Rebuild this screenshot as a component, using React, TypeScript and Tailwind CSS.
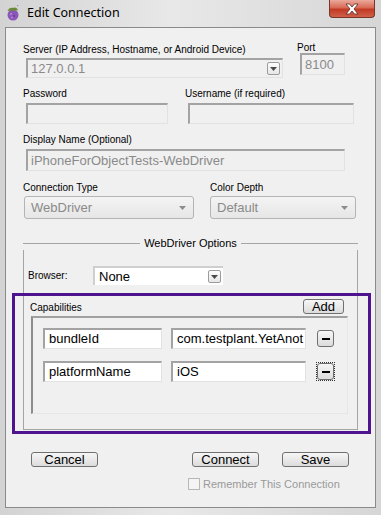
import React from "react";

const font = { fontFamily: '"Liberation Sans", Arial, sans-serif' };

const sunken =
  "border-t-2 border-l-2 border-t-[#a3a3a3] border-l-[#a3a3a3] border-r border-b border-r-[#e2e2e2] border-b-[#e2e2e2]";

const SmallArrowButton = () => (
  <div className="flex h-[13px] w-[13px] items-center justify-center rounded-[2px] border border-[#9c9c9c] bg-[linear-gradient(#fdfdfd,#e6e6e6)]">
    <svg width="7" height="4" viewBox="0 0 7 4">
      <path d="M0 0h7L3.5 4z" fill="#4a4a4a" />
    </svg>
  </div>
);

const Win7Select = ({ value, width }: { value: string; width: string }) => (
  <div
    className={`flex h-[23px] ${width} items-center justify-between rounded-[3px] border border-[#b4b4b4] bg-[linear-gradient(#f4f4f4,#e6e6e6)] pl-[6px] pr-[7px]`}
  >
    <span className="text-[13px] text-[#8a8a8a]">{value}</span>
    <svg width="7" height="4" viewBox="0 0 7 4">
      <path d="M0 0h7L3.5 4z" fill="#8c8c8c" />
    </svg>
  </div>
);

const Btn = ({
  label,
  className = "",
}: {
  label: string;
  className?: string;
}) => (
  <div
    className={`flex items-center justify-center rounded-[3px] border border-[#707070] bg-[linear-gradient(#f6f6f6,#dcdcdc)] text-[13px] leading-none text-black ${className}`}
  >
    {label}
  </div>
);

const CapRow = ({
  k,
  v,
  focused,
}: {
  k: string;
  v: string;
  focused?: boolean;
}) => (
  <div className="flex items-center">
    <div
      className={`flex h-[21px] w-[119px] items-center overflow-hidden bg-white pl-[4px] text-[13px] text-black ${sunken}`}
    >
      {k}
    </div>
    <div
      className={`ml-[9px] flex h-[21px] w-[135px] items-center overflow-hidden whitespace-nowrap bg-white pl-[4px] text-[13px] text-black ${sunken}`}
    >
      {v}
    </div>
    <div
      className={`ml-[10px] flex h-[19px] w-[19px] items-center justify-center ${
        focused ? "border border-dotted border-[#333]" : ""
      }`}
    >
      <div className="flex h-[17px] w-[17px] items-center justify-center rounded-[3px] border border-[#707070] bg-[linear-gradient(#f6f6f6,#dcdcdc)]">
        <div className="h-[2px] w-[8px] bg-black" />
      </div>
    </div>
  </div>
);

export default function App() {
  return (
    <div
      className="relative h-[515px] w-[381px] overflow-hidden bg-[linear-gradient(90deg,#d3d3d3,#e8e8e8_45%,#d6d6d6)]"
      style={font}
    >
      {/* Title bar */}
      <div className="flex h-[27px] items-start">
        <div className="ml-[6px] mt-[5px]">
          <svg width="14" height="16" viewBox="0 0 14 16">
            <ellipse cx="7" cy="10" rx="5.5" ry="5.5" fill="#8a56b8" />
            <circle cx="5" cy="9" r="1" fill="#b690d8" />
            <circle cx="8" cy="11" r="1" fill="#6a3a96" />
            <circle cx="6" cy="12.5" r="0.9" fill="#b690d8" />
            <path d="M1.5 6c1-3 4-4 6-3 1.5-1 4 0 4.5 2.5-1.5-0.5-3 0-4 0.5-2-1-4.5-0.5-6.5 0z" fill="#6a8a3a" />
            <path d="M11 1l1.5-1" stroke="#9a7ac8" strokeWidth="1" />
          </svg>
        </div>
        <div
          className="ml-[7px] mt-[5px] text-[12.5px] leading-[16px] text-black"
          style={{ fontFamily: '"Noto Sans", "Open Sans", sans-serif' }}
        >
          Edit Connection
        </div>
        <div className="ml-auto mr-[6px] flex h-[18px] w-[46px] items-center justify-center rounded-b-[4px] border border-t-0 border-[#7a3428] bg-[linear-gradient(#eba99b,#d86a55_45%,#c23a25_55%,#d0604a)]">
          <svg width="16" height="12" viewBox="0 0 16 12">
            <path
              d="M2 1h3.5L8 4l2.5-3H14l-4 5 4 5h-3.5L8 8l-2.5 3H2l4-5z"
              fill="#fff"
              stroke="#5a2a22"
              strokeWidth="0.8"
            />
          </svg>
        </div>
      </div>

      {/* Content panel */}
      <div className="ml-[5px] flex h-[481px] w-[371px] flex-col border border-[#8a8a8a] bg-[#f0f0f0] text-[10px] text-black">
        {/* Server / Port */}
        <div className="flex pl-[17px] pt-[15px]">
          <div className="flex w-[274px] flex-col">
            <div className="leading-[13px]">
              Server (IP Address, Hostname, or Android Device)
            </div>
            <div
              className={`ml-[3px] mt-[2px] flex h-[20px] w-[257px] items-center justify-between pl-[3px] pr-[2px] text-[13px] text-[#8a8a8a] ${sunken}`}
            >
              <span>127.0.0.1</span>
              <SmallArrowButton />
            </div>
          </div>
          <div className="flex flex-col">
            <div className="leading-[10px]">Port</div>
            <div
              className={`ml-[3px] flex h-[22px] w-[45px] items-center pl-[3px] text-[13px] text-[#8a8a8a] ${sunken}`}
            >
              8100
            </div>
          </div>
        </div>

        {/* Password / Username */}
        <div className="mt-[9px] flex pl-[17px]">
          <div className="flex w-[162px] flex-col">
            <div className="leading-[13px]">Password</div>
            <div className={`ml-[3px] mt-[3px] h-[21px] w-[142px] ${sunken}`} />
          </div>
          <div className="flex flex-col">
            <div className="leading-[13px]">Username (if required)</div>
            <div className={`ml-[3px] mt-[3px] h-[21px] w-[166px] ${sunken}`} />
          </div>
        </div>

        {/* Display name */}
        <div className="mt-[9px] flex flex-col pl-[17px]">
          <div className="leading-[13px]">Display Name (Optional)</div>
          <div
            className={`ml-[3px] mt-[3px] flex h-[22px] w-[319px] items-center pl-[3px] text-[13px] text-[#8a8a8a] ${sunken}`}
          >
            iPhoneForObjectTests-WebDriver
          </div>
        </div>

        {/* Connection type / Color depth */}
        <div className="mt-[10px] flex pl-[17px]">
          <div className="flex w-[187px] flex-col">
            <div className="leading-[13px]">Connection Type</div>
            <div className="ml-[1px] mt-[2px]">
              <Win7Select value="WebDriver" width="w-[170px]" />
            </div>
          </div>
          <div className="flex flex-col">
            <div className="leading-[13px]">Color Depth</div>
            <div className="mt-[2px]">
              <Win7Select value="Default" width="w-[146px]" />
            </div>
          </div>
        </div>

        {/* WebDriver Options group */}
        <div className="ml-[17px] mt-[17px] flex w-[335px] flex-col">
          <div className="flex h-[14px] items-center">
            <div className="h-px flex-1 bg-[#a5a5a5]" />
            <div className="px-[4px] text-[11px] leading-[14px]">
              WebDriver Options
            </div>
            <div className="h-px flex-1 bg-[#a5a5a5]" />
          </div>
          <div className="flex h-[180px] flex-col border-x border-b border-[#a5a5a5]">
            <div className="mt-[16px] flex items-center">
              <div className="ml-[4px] w-[65px] text-[10px]">Browser:</div>
              <div className="flex h-[19px] w-[130px] items-center justify-between border-l-2 border-t-2 border-[#e6e6e6] border-l-[#cfcfcf] border-t-[#cfcfcf] bg-white pl-[4px] pr-[2px] text-[13px]">
                <span>None</span>
                <SmallArrowButton />
              </div>
            </div>

            <div className="mt-[14px] flex items-end justify-between pl-[6px] pr-[13px]">
              <div className="text-[10px] leading-[12px]">Capabilities</div>
              <Btn label="Add" className="h-[15px] w-[41px]" />
            </div>
            <div className="ml-[7px] mt-[2px] flex h-[98px] w-[317px] flex-col gap-[12px] border-l-2 border-t-2 border-b border-r border-[#e6e6e6] border-l-[#8c8c8c] border-t-[#a0a0a0] pl-[10px] pt-[10px]">
              <CapRow k="bundleId" v="com.testplant.YetAnot" />
              <CapRow k="platformName" v="iOS" focused />
            </div>
          </div>
        </div>

        {/* Bottom buttons */}
        <div className="mt-[22px] flex pl-[25px]">
          <Btn label="Cancel" className="h-[15px] w-[67px]" />
          <Btn label="Connect" className="ml-[94px] h-[15px] w-[67px]" />
          <Btn label="Save" className="ml-[23px] h-[15px] w-[67px]" />
        </div>
        <div className="ml-[182px] mt-[9px] flex items-center">
          <div className="h-[12px] w-[12px] border border-[#b8b8b8] bg-[#f4f4f4]" />
          <div className="ml-[3px] text-[11px] text-[#9a9a9a]">
            Remember This Connection
          </div>
        </div>
      </div>

      {/* Purple highlight annotation */}
      <div className="pointer-events-none absolute left-[12px] top-[293px] h-[141px] w-[359px] border-[3px] border-[#4e1490]" />
    </div>
  );
}
